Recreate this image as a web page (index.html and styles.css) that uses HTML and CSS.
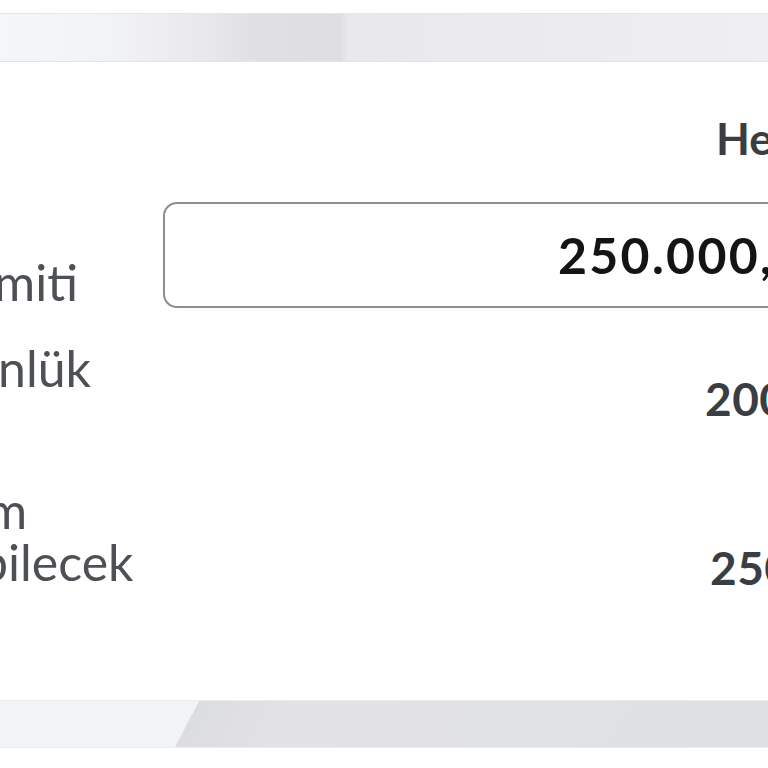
FILE: index.html
```html
<!DOCTYPE html>
<html lang="tr">
<head>
<meta charset="utf-8">
<title>Limitler</title>
<link rel="stylesheet" href="styles.css">
</head>
<body>
<div class="screen">
  <div class="band band-top"></div>
  <div class="content">
    <div class="row row-head">
      <div class="label"></div>
      <div class="value head">Hesap</div>
    </div>
    <div class="row row-input">
      <div class="label label-input"><span class="frag frag-limit">miti</span></div>
      <div class="field"><span class="field-text">250.000,00</span></div>
    </div>
    <div class="row row-daily">
      <div class="label"><span class="frag frag-daily">nlük</span></div>
      <div class="value value-daily">200.000,00</div>
    </div>
    <div class="row row-avail">
      <div class="label"><span class="frag frag-m">m</span><span class="frag frag-bil">bilecek</span></div>
      <div class="value value-avail">250.000,00</div>
    </div>
  </div>
  <div class="band band-bottom"></div>
</div>
</body>
</html>
```
FILE: styles.css
```css
html, body {
  margin: 0;
  padding: 0;
  background: #ffffff;
}
body {
  width: 768px;
  height: 768px;
  overflow: hidden;
  font-family: "Lato", "Noto Sans", sans-serif;
}
.screen {
  width: 768px;
  padding-top: 13px;
}
.band {
  height: 49px;
}
.band-top {
  background: linear-gradient(90deg, #f5f6f8 0, #f2f3f5 110px, #e8e8ea 210px, #e0e0e4 255px, #dedee2 340px, #e9e9eb 348px, #ebebed 520px, #efeff1 768px);
  box-shadow: inset 0 1px 0 #e6e6e8, inset 0 -1px 0 #e2e2e8;
}
.content {
  display: flow-root;
  height: 638px;
  width: 768px;
  overflow: hidden;
}
.row {
  display: flex;
  align-items: flex-start;
}
.label {
  width: 163px;
  flex: none;
  font-size: 50px;
  line-height: 52px;
  color: #4d5055;
  white-space: nowrap;
  overflow: hidden;
}
.frag {
  display: block;
}
.frag-limit {
  margin-left: -6px;
}
.frag-daily {
  margin-left: -2px;
}
.frag-m {
  margin-left: -14px;
}
.frag-bil {
  margin-left: -20px;
}
.value {
  font-weight: 700;
  color: #3a3d42;
  white-space: nowrap;
}
.row-head {
  margin-top: 50px;
}
.head {
  font-size: 44px;
  line-height: 53px;
  padding-left: 553px;
}
.row-input {
  margin-top: 37px;
  height: 106px;
}
.label-input {
  padding-top: 54px;
}
.field {
  flex: none;
  width: 800px;
  height: 106px;
  box-sizing: border-box;
  border: 2px solid #8d8d8f;
  border-radius: 14px;
  display: flex;
  align-items: center;
  padding-left: 393px;
}
.field-text {
  font-size: 50px;
  font-weight: 700;
  letter-spacing: 2.3px;
  color: #141414;
  white-space: nowrap;
}
.row-daily {
  margin-top: 34px;
}
.value-daily {
  font-size: 46px;
  line-height: 55px;
  padding-top: 29px;
  padding-left: 542px;
  letter-spacing: 0.5px;
}
.row-avail {
  margin-top: 58px;
}
.value-avail {
  font-size: 46px;
  line-height: 55px;
  padding-top: 56px;
  padding-left: 547px;
  letter-spacing: 0.5px;
}
.band-bottom {
  height: 48px;
  background: linear-gradient(117.5deg, #f3f4f6 0, #f2f3f5 177px, #dcdde0 177px, #e2e2e4 260px, #e0e1e4 520px, #dfe0e3 768px);
  box-shadow: inset 0 1px 0 #ececee, inset 0 -1px 0 #ececee;
}
```
